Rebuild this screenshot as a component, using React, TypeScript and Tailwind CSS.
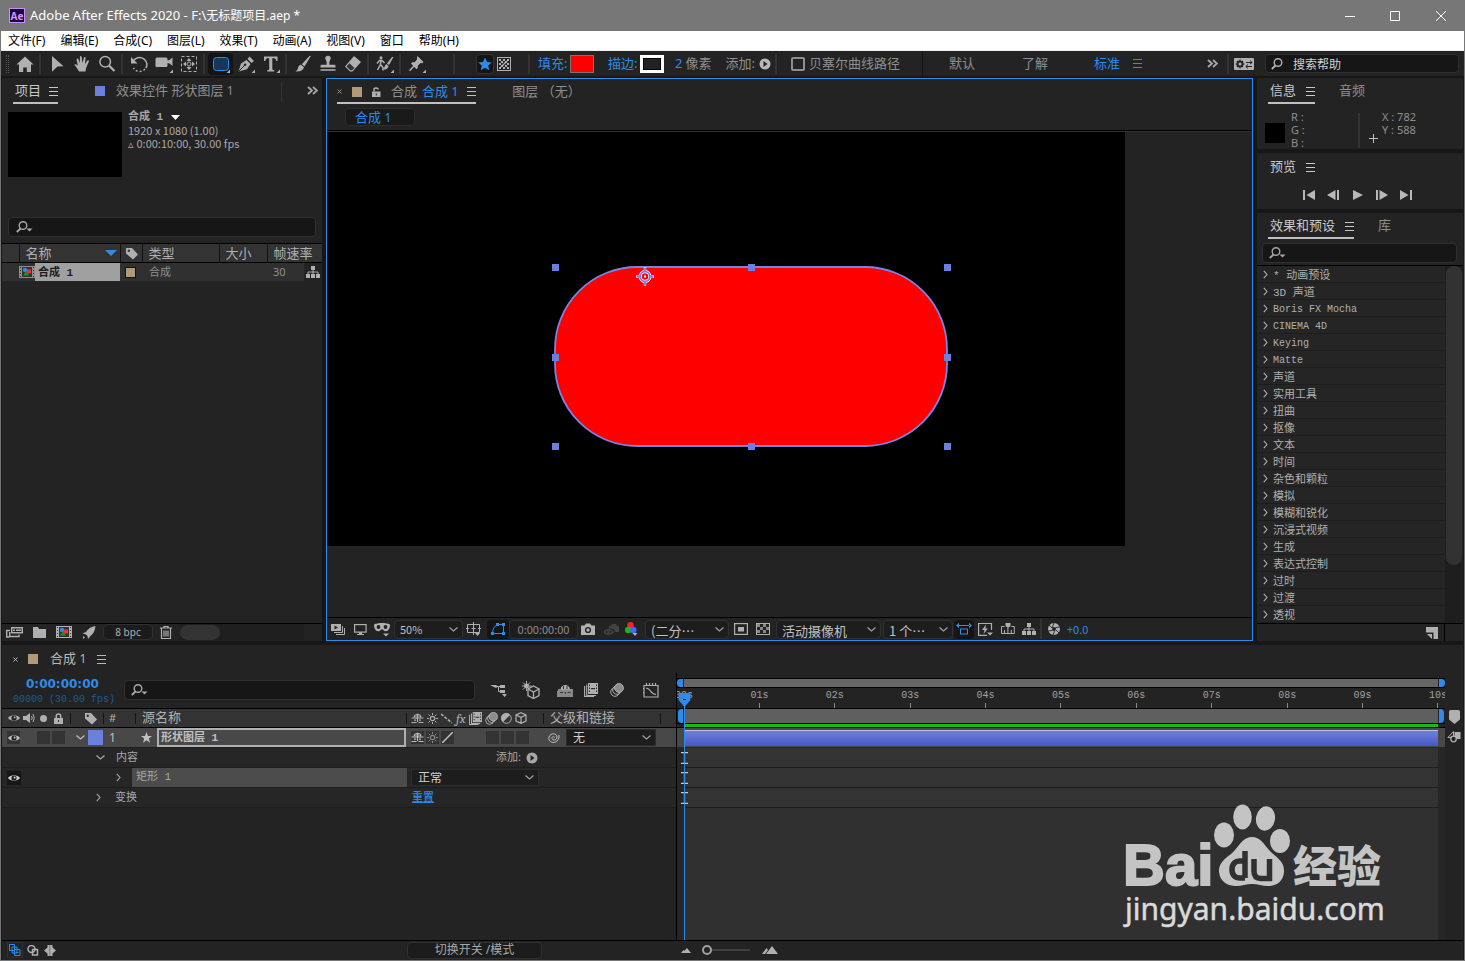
import React from "react";

const CJK = "font-['Noto_Sans','Noto_Sans_CJK_SC',sans-serif]";
const NARROW = "font-['Noto_Sans_CJK_SC',sans-serif]";
const MONO = "font-['Liberation_Mono','Noto_Sans_CJK_SC',monospace]";

type IconProps = {
  w?: number;
  h?: number;
  className?: string;
  children: React.ReactNode;
};

/** Icon frame whose user units equal screen pixels. */
function Icon({ w = 18, h = 18, className = "", children }: IconProps) {
  return (
    <svg
      width={w}
      height={h}
      viewBox={`0 0 ${w} ${h}`}
      className={`shrink-0 ${className}`}
      fill="currentColor"
      stroke="none"
      aria-hidden="true"
    >
      {children}
    </svg>
  );
}

const line = { fill: "none", stroke: "currentColor", strokeWidth: 1 } as const;
const line15 = { fill: "none", stroke: "currentColor", strokeWidth: 1.5 } as const;

/* ---------- shared icons ---------- */

const Menu = ({ className = "" }: { className?: string }) => (
  <Icon w={9} h={9} className={className}>
    <path d="M0 0h9v1H0zM0 4h9v1H0zM0 8h9v1H0z" />
  </Icon>
);
const Caret = () => (
  <Icon w={9} h={5}>
    <path d="M0.5 0.5 4.5 4 8.5 0.5" {...line} strokeWidth={1.2} />
  </Icon>
);
const Right = () => (
  <Icon w={5} h={9}>
    <path d="M0.8 0.8 4 4.5 0.8 8.2" {...line} strokeWidth={1.1} />
  </Icon>
);
const Guillemet = () => (
  <Icon w={11} h={9}>
    <path d="M1 1l4 3.5L1 8M6 1l4 3.5L6 8" {...line} strokeWidth={1.8} />
  </Icon>
);
const Search = ({ drop = true }: { drop?: boolean }) => (
  <Icon w={18} h={12}>
    <circle cx="7" cy="4.5" r="3.8" {...line} strokeWidth={1.4} />
    <path d="M4.5 7.5 0.8 11" {...line} strokeWidth={1.8} />
    {drop && <path d="M10.5 7.5h6l-3 3z" />}
  </Icon>
);
const PlayDot = () => (
  <Icon w={12} h={12}>
    <circle cx="6" cy="6" r="5.5" />
    <path d="M4.5 3v6l4-3z" fill="#222" />
  </Icon>
);
const Eye = ({ bright = false }: { bright?: boolean }) => (
  <Icon w={12} h={8} className={bright ? "text-[#d0d0d0]" : ""}>
    <path d="M0 4C2.5 0.3 9.5 0.3 12 4 9.5 7.7 2.5 7.7 0 4z" />
    <circle cx="6" cy="4" r="2.6" fill="#222" />
    <circle cx="6.6" cy="3.4" r="1" />
  </Icon>
);
const Tag = () => (
  <Icon w={13} h={13}>
    <path d="M1 1l6 0L13 7.5 8 12.5 1 6.5z" />
    <circle cx="3.8" cy="3.8" r="1.2" fill="#333" />
  </Icon>
);
const Comp = () => (
  <Icon w={16} h={12}>
    <path d="M0 0h16v12H0z" />
    <path d="M1 1h1v1H1zM1 4h1v1H1zM1 7h1v1H1zM1 10h1v1H1zM14 1h1v1h-1zM14 4h1v1h-1zM14 7h1v1h-1zM14 10h1v1h-1zM3 1h10v10H3z" fill="#333" />
    <circle cx="6" cy="4" r="2.2" fill="#2d8ceb" />
    <path d="M8 3.5h4v4H8z" fill="#e33" />
    <path d="M4 9.5 7 5.5l3 4z" fill="#1a9c1a" />
  </Icon>
);
const Flow = () => (
  <Icon w={14} h={12}>
    <path d="M5 0h4v4H5zM0 8h4v4H0zM5 8h4v4H5zM10 8h4v4h-4z" />
    <path d="M7 4v4M2 8V6h10v2" {...line} />
  </Icon>
);
const Shy = () => (
  <Icon w={13} h={11}>
    <path d="M2.5 4.500C2.500-.5 10.500-.5 10.500 4.500z" />
    <path d="M0.500 5h12M6.500 1v8M0.500 9.500h5M7.500 9.500h5M3 7.200h2M8 7.200h2" {...line} strokeWidth={1.2} />
    <path d="M5 1.800v2.500M8 1.800v2.500" stroke="#333" strokeWidth="1" />
  </Icon>
);
const Sun = ({ dim = false }: { dim?: boolean }) => (
  <Icon w={11} h={11} className={dim ? "text-[#8a8a8a]" : ""}>
    <circle cx="5.5" cy="5.5" r="2.2" {...line} strokeWidth={1.2} />
    <path d="M5.5 0v2M5.5 9v2M0 5.5h2M9 5.5h2M1.6 1.6 3 3M8 8l1.4 1.4M9.4 1.6 8 3M3 8 1.6 9.4" {...line} />
  </Icon>
);
const Film = ({ size = 12 }: { size?: number }) => (
  <svg width={size} height={size} viewBox="0 0 14 14" className="shrink-0" fill="currentColor" aria-hidden="true">
    <path d="M4 0h10v11H4z" />
    <path d="M5 1.500h1v1.500H5zM5 4.500h1V6H5zM5 7.500h1V9H5zM12 1.500h1v1.500h-1zM12 4.500h1V6h-1zM12 7.500h1V9h-1zM7 5h4v1.200H7z" fill="#2b2b2b" />
    <path d="M2.700 1.500v11H12M.6 3v10.500h9.500" {...line} strokeWidth={1.1} />
  </svg>
);
const Blur = ({ size = 12 }: { size?: number }) => (
  <svg width={size} height={size} viewBox="0 0 14 14" className="shrink-0" aria-hidden="true">
    <circle cx="5" cy="9" r="4.300" {...line} />
    <circle cx="7" cy="7" r="4.300" {...line} />
    <circle cx="9" cy="5" r="4.400" fill="#8c8c8c" stroke="#b0b0b0" />
  </svg>
);
const Cube = ({ size = 12 }: { size?: number }) => (
  <svg width={size} height={size} viewBox="0 0 12 12" className="shrink-0" aria-hidden="true">
    <path d="M6 .7 11 3v6L6 11.3 1 9V3zM1 3l5 2.4L11 3M6 5.4v5.9" {...line} strokeWidth={1.2} />
  </svg>
);

/* ---------- toolbar ---------- */

const corner = <path d="M18 14.5V18h-3.5z" />;

const tools: { name: string; on?: boolean; icon: React.ReactNode }[][] = [
  [{ name: "主页", icon: <path d="M9 1.5 17.5 9.5H15V17h-4.2v-4.5H7.2V17H3V9.5H.5z" /> }],
  [
    { name: "选取工具", icon: <path d="M4 1 15.5 11.2 9.5 11.5 4 16.8z" /> },
    {
      name: "手形工具",
      icon: (
        <path d="M6 16.5C4.5 13.5 2.5 11.5 1.3 9.8c.8-1 2-.7 3.5.9L3.600 4.500c0-1.200 1.500-1.300 1.800-.2L6.800 8.300 6.900 2c.1-1.200 1.700-1.200 1.800 0L9.400 8l1.500-5.300c.4-1 1.800-.7 1.700.4L12 9l2.400-3.400c.8-.8 1.900-.1 1.500.8L13.5 12c-.6 1.6-.8 3-1 4.5z" />
      ),
    },
    {
      name: "缩放工具",
      icon: (
        <>
          <circle cx="7.2" cy="6.8" r="5.3" {...line15} />
          <path d="M11 10.6 16.5 16" {...line} strokeWidth={2.2} />
        </>
      ),
    },
  ],
  [
    {
      name: "旋转工具",
      icon: (
        <>
          <path d="M3 6.5C5 2.5 10 1.2 13.8 3.8 17 6 17.8 10 15.8 13" {...line15} />
          <path d="M15 14C12 17.5 6 17.2 3.5 13" {...line15} strokeDasharray="2 2" />
          <path d="M1 2v6.500h6.500z" />
        </>
      ),
    },
    {
      name: "摄像机工具",
      icon: (
        <>
          <path d="M.5 4q0-1.500 1.500-1.500h9q1.500 0 1.500 1.500v1.500l2-.5L17.500 2.500v8.500L14.500 8.500l-2-.5v2.500q0 1.500-1.500 1.500H2Q.5 12.500.5 11z" />
          {corner}
        </>
      ),
    },
    {
      name: "锚点工具",
      icon: (
        <>
          <rect x="1.500" y="1.500" width="15" height="15" {...line} strokeDasharray="3 2" />
          <path d="M9 3l2.500 3h-5zM9 15l2.500-3h-5zM3 9l3-2.500v5zM15 9l-3-2.500v5z" />
          <circle cx="9" cy="9" r="2" {...line} />
        </>
      ),
    },
  ],
  [
    {
      name: "圆角矩形工具",
      on: true,
      icon: (
        <>
          <rect x="1.500" y="2.500" width="15" height="13" rx="3" fill="#16365c" stroke="#2d8ceb" />
          <path d="M18 14.500V18h-3.500z" fill="#b0b0b0" />
        </>
      ),
    },
    {
      name: "钢笔工具",
      icon: (
        <>
          <path d="M1.500 16.500 4 8.500 9.500 5l4 4L10 14.300z" />
          <path d="M2 16 7.500 10.500" stroke="#232323" fill="none" />
          <circle cx="8" cy="9.800" r="1.300" fill="#232323" />
          <path d="M10.500 4 12.500 1.500 17 6l-2.500 2z" />
          {corner}
        </>
      ),
    },
    {
      name: "横排文字工具",
      icon: (
        <>
          <path d="M2 1.500h13.500V6h-1.200q-.5-2.800-2-2.800h-2V14q0 1.200 2 1.300v1.200H5.200v-1.200q2-.1 2-1.300V3.200h-2q-1.500 0-2 2.800H2z" />
          {corner}
        </>
      ),
    },
  ],
  [
    {
      name: "画笔工具",
      icon: <path d="M17 .8 10.500 11.500 7.800 9.200 15.500 1zM7 9.800l3 2.500c-.8 3-3.500 4.500-8.500 4.200 2.200-1.200 2-2.500 2.700-4.200.6-1.500 1.600-2.300 2.800-2.500z" />,
    },
    {
      name: "仿制图章工具",
      icon: (
        <path d="M9 .8c2 0 3 1.400 2.700 2.900L10.400 7v2.800h5.100q1 0 1 1v1.700h-15v-1.700q0-1 1-1h5.100V7L6.300 3.700C6 2.200 7 .8 9 .8zM1.500 14.200h15v1.600h-15z" />
      ),
    },
    {
      name: "橡皮擦工具",
      icon: (
        <>
          <path d="M10 1 17 7 8.500 16.500H6L1 11.500z" />
          <path d="M2.500 11.500 5.500 8.200l5 4.700L8 15.300H6.300z" fill="#333" />
        </>
      ),
    },
  ],
  [
    {
      name: "Roto 笔刷工具",
      icon: (
        <>
          <circle cx="5" cy="2.800" r="1.500" />
          <path d="M5 4.500 4.500 9.500 1.500 15M4.500 9.500l2.500 3v3M1 8.500 3.500 5.500H6L8.500 8" {...line15} />
          <path d="M17.500 2 13 10l-2-1.600L16 2zM10.300 9l2.300 1.900c-.5 2.500-2.500 3.900-6 3.600 1.800-1 2-4 3.700-5.500z" />
          {corner}
        </>
      ),
    },
  ],
  [
    {
      name: "人偶位置控点工具",
      icon: (
        <>
          <path d="M9.500 1 15.500 7 14.300 8.200 12.500 8 9.800 10.800V13L8.500 14.200 3 8.500 4.200 7.300H6.500L9 4.500V2.300z" />
          <path d="M6 11 1.500 15.800" {...line15} />
          {corner}
        </>
      ),
    },
  ],
];

function Sep({ className = "" }: { className?: string }) {
  return <span className={`h-5 w-[2px] shrink-0 bg-[#333] ${className}`} />;
}

function Toolbar() {
  return (
    <div className={`flex h-[27px] shrink-0 items-center border-b-2 border-[#171717] bg-[#232323] text-[13px] text-[#8f8f8f] ${CJK}`}>
      <span className="ml-[5px] mr-[3px] h-[18px] w-[3px] border-x border-dotted border-[#555]" />
      {tools.map((group, i) => (
        <React.Fragment key={i}>
          {i > 0 && <Sep className="mx-[2px] mr-[3px]" />}
          {group.map((t) => (
            <button
              key={t.name}
              type="button"
              aria-label={t.name}
              className={`flex h-[22px] w-[25px] items-center justify-center rounded text-[#b0b0b0] ${t.on ? "bg-[#141414]" : ""}`}
            >
              <Icon>{t.icon}</Icon>
            </button>
          ))}
        </React.Fragment>
      ))}
      <Sep className="ml-6 mr-[21px]" />
      <button type="button" aria-label="形状" className="flex h-5 w-[18px] items-center justify-center rounded border border-[#333] bg-[#141414] text-[#2d8ceb]">
        <Icon w={14} h={14}>
          <path d="M7 .5 9 5l4.800.4-3.600 3.200 1.100 4.700L7 10.800l-4.300 2.500 1.100-4.700L.2 5.400 5 5z" />
        </Icon>
      </button>
      <button type="button" aria-label="蒙版" className="ml-[3px] text-[#b0b0b0]">
        <Icon w={14} h={14}>
          <rect x=".5" y=".5" width="13" height="13" {...line} />
          <path d="M2 2h2v2H2zM6 2h2v2H6zM10 2h2v2h-2zM4 4h2v2H4zM8 4h2v2H8zM2 6h2v2H2zM10 6h2v2h-2zM4 8h2v2H4zM8 8h2v2H8zM2 10h2v2H2zM6 10h2v2H6zM10 10h2v2h-2z" />
          <path d="M4 10 10 4" {...line15} />
        </Icon>
      </button>
      <Sep className="ml-[17px] mr-2" />
      <button type="button" className="w-8 text-left text-[#2d8ceb]">填充:</button>
      <button type="button" aria-label="填充颜色" className="h-[18px] w-6 border border-[#777] bg-[#f00]" />
      <button type="button" className="ml-[14px] w-8 text-left text-[#2d8ceb]">描边:</button>
      <button type="button" aria-label="描边颜色" className="h-[18px] w-6 border-4 border-white bg-[#222] outline outline-1 -outline-offset-4 outline-black" />
      <button type="button" className="ml-[11px] text-[#2d8ceb]">2</button>
      <span className="ml-[3px]">像素</span>
      <span className="ml-[14px]">添加:</span>
      <button type="button" aria-label="添加" className="ml-1 text-[#b8b8b8]"><PlayDot /></button>
      <Sep className="ml-1" />
      <label className="ml-[14px] flex items-center gap-1">
        <input type="checkbox" className="size-[14px] appearance-none rounded-[2px] border-2 border-[#8f8f8f]" />
        贝塞尔曲线路径
      </label>
      <span className="ml-[22px] h-6 w-px bg-[#151515]" />
      <button type="button" className="ml-[26px]">默认</button>
      <button type="button" className="ml-[47px]">了解</button>
      <button type="button" className="ml-[46px] text-[#2d8ceb]">标准</button>
      <button type="button" aria-label="工作区菜单" className="ml-[13px] text-[#2d8ceb]"><Menu /></button>
      <span className="flex-1" />
      <button type="button" aria-label="更多工作区" className="text-[#a8a8a8]"><Guillemet /></button>
      <Sep className="ml-[9px] mr-[5px]" />
      <button type="button" aria-label="工作区设置" className="text-[#b0b0b0]">
        <Icon w={20} h={12}>
          <rect width="20" height="12" rx="1" />
          <circle cx="6" cy="6" r="2.500" fill="none" stroke="#232323" strokeWidth="2" />
          <path d="M6 1.500v9M1.500 6h9M3 3l6 6M9 3 3 9" stroke="#232323" strokeWidth="1.200" />
          <circle cx="6" cy="6" r="1.500" />
          <path d="M12 4.500h6M16 2.500l2.200 2L16 6M18 8.500h-6M14 6.500l-2.200 2 2.200 2" stroke="#232323" fill="none" />
        </Icon>
      </button>
      <label className="ml-[11px] mr-[5px] flex h-[19px] w-[194px] items-center gap-1 rounded border border-[#2e2e2e] bg-[#161616] pl-[5px] text-[#b0b0b0]">
        <Search drop={false} />
        <input
          aria-label="搜索帮助"
          placeholder="搜索帮助"
          className={`min-w-0 flex-1 bg-transparent pt-[2px] text-[12px] outline-none placeholder:text-[#d0d0d0] ${CJK}`}
        />
      </label>
    </div>
  );
}

/* ---------- project panel ---------- */

function ProjectPanel() {
  return (
    <section className={`flex w-[320px] shrink-0 flex-col bg-[#232323] ${CJK}`}>
      <div className="flex h-[26px] items-start pr-1 text-[13px] text-[#8f8f8f]">
        <button type="button" className="ml-[11px] flex h-[26px] items-center gap-2 border-b-2 border-[#c0c0c0] pl-[2px] pt-[2px] text-[#c8c8c8]">
          项目 <Menu />
        </button>
        <button type="button" className="ml-[37px] flex h-[26px] items-center gap-[11px] whitespace-nowrap">
          <span className="size-[10px] bg-[#6a7fe0]" />
          <span>效果控件 形状图层 <span className="text-[12px]">1</span></span>
        </button>
        <span className="flex-1" />
        <span className="mt-1 h-5 w-px bg-[#333]" />
        <button type="button" aria-label="更多面板" className="ml-[25px] mt-2 text-[#a8a8a8]"><Guillemet /></button>
      </div>
      <div className="flex gap-[6px] pl-[6px] pt-2">
        <div className="h-[65px] w-[114px] bg-black" />
        <div className={`-mt-px text-[11px] leading-[13px] text-[#a8a8a8] ${NARROW}`}>
          <button type="button" className={`flex items-center gap-2 font-bold ${MONO}`}>
            合成 1
            <Icon w={9} h={5} className="text-white"><path d="M0 0h9L4.500 5z" /></Icon>
          </button>
          <p>1920 x 1080 (1.00)</p>
          <p>▵ 0:00:10:00, 30.00 fps</p>
        </div>
      </div>
      <label className="mx-[6px] mt-10 flex h-5 items-center rounded border border-[#303030] bg-[#161616] pl-[7px] text-[#a8a8a8]">
        <Search />
        <input aria-label="搜索项目" className="min-w-0 flex-1 bg-transparent text-[12px] outline-none" />
      </label>
      <table className="mt-[6px] w-full table-fixed border-collapse text-[#b0b0b0]">
        <colgroup>
          <col className="w-[17px]" />
          <col className="w-[101px]" />
          <col className="w-[22px]" />
          <col className="w-[77px]" />
          <col className="w-12" />
          <col />
        </colgroup>
        <thead>
          <tr className="h-[19px] border-y border-black bg-[#333] text-[13px] leading-4">
            <th className="border-r border-[#111]" />
            <th className="border-r border-[#111] p-0 pl-[6px] text-left font-normal">
              <span className="flex items-center justify-between pr-[3px]">
                名称
                <Icon w={12} h={6} className="text-[#2d8ceb]"><path d="M0 0h12L6 6z" /></Icon>
              </span>
            </th>
            <th className="border-r border-[#111] p-0 pl-1" aria-label="标签"><Tag /></th>
            <th className="border-r border-[#111] p-0 pl-[6px] text-left font-normal">类型</th>
            <th className="border-r border-[#111] p-0 pl-[6px] text-left font-normal">大小</th>
            <th className="p-0 pl-[6px] text-left font-normal">帧速率</th>
          </tr>
        </thead>
        <tbody>
          <tr className="h-[18px] bg-[#303030] text-[11px] leading-4 text-[#8f8f8f]">
            <td className="p-0" />
            <td className="p-0">
              <span className="flex items-center">
                <Comp />
                <span className={`flex h-[18px] flex-1 items-center bg-[#a0a0a0] pl-[3px] pt-px font-bold text-[#1c1c1c] ${MONO}`}>合成 1</span>
              </span>
            </td>
            <td className="p-0 pl-[5px]"><span className="block size-[11px] border border-[#111] bg-[#b09a78]" /></td>
            <td className="p-0 pl-[7px]">合成</td>
            <td className="p-0" />
            <td className="p-0 pl-[6px]">
              <span className="flex items-center justify-between">30<span className="flex h-[18px] items-center bg-[#232323] px-[2px] text-[#b0b0b0]"><Flow /></span></span>
            </td>
          </tr>
        </tbody>
      </table>
      <div className="flex-1" />
      <div className="flex h-[18px] items-center border-t border-black pb-px pl-1 text-[#b0b0b0]">
        <button type="button" aria-label="解释素材" className="w-[27px]">
          <Icon w={17} h={12}>
            <path d="M5.700 1.700h10.600v5H5.700zM0 4.500h4M.7 4v7H3.500M3.700 6v4.500H13V8.500" {...line} strokeWidth={1.4} />
            <path d="M7 3.500h2v1.500H7zM10 3.500h5v1.500h-5z" />
          </Icon>
        </button>
        <button type="button" aria-label="新建文件夹" className="w-[23px]">
          <Icon w={14} h={11}><path d="M0 0h5l1 2h7v9H0z" /></Icon>
        </button>
        <button type="button" aria-label="新建合成" className="w-[26px]"><Comp /></button>
        <button type="button" aria-label="项目设置" className="w-[21px]">
          <Icon w={14} h={13}><path d="M13.500 0C9 .5 6 3 4 6L0.500 7.500 4 8.500 5.500 10 6 13 8.500 10C11 8 13 5 13.500 0zM1 10l2 1.500L1 13z" /></Icon>
        </button>
        <button type="button" className="h-4 w-[50px] rounded-sm border border-[#303030] bg-[#1c1c1c] text-[10px] leading-none">8 bpc</button>
        <button type="button" aria-label="删除" className="ml-[7px]">
          <Icon w={12} h={13}><path d="M4 1.500V.5h4v1M0 2h12M1.500 2.500v10h9v-10M4 4.500v6M6 4.500v6M8 4.500v6" {...line} strokeWidth={1.2} /></Icon>
        </button>
        <div className="ml-2 mr-[18px] h-full flex-1 bg-[#1f1f1f]"><div className="mt-px h-[15px] w-10 rounded-full bg-[#333]" /></div>
      </div>
    </section>
  );
}

/* ---------- composition viewer ---------- */

const handles = [
  [228, 135], [424, 135], [620, 135],
  [228, 225], [620, 225],
  [228, 314], [424, 314], [620, 314],
];

function FooterSelect({ label, value, className }: { label: string; value: string; className: string }) {
  return (
    <span className={`relative flex h-[19px] items-center rounded border border-[#303030] bg-[#1d1d1d] ${className}`}>
      <select aria-label={label} className="h-full w-full appearance-none bg-transparent pl-[5px] text-[#c0c0c0] outline-none">
        <option>{value}</option>
      </select>
      <span className="pointer-events-none absolute right-1 text-[#a0a0a0]"><Caret /></span>
    </span>
  );
}

function Viewer() {
  return (
    <section className={`flex min-w-0 flex-1 flex-col border border-[#2d8ceb] bg-[#232323] ${CJK}`}>
      <div className="flex h-[25px] text-[13px] text-[#8f8f8f]">
        <div className="ml-[10px] flex items-center border-b-2 border-[#c0c0c0] pt-[2px]">
          <button type="button" aria-label="关闭"><Icon w={5} h={5}><path d="M.5.5l4 4M4.500.5l-4 4" {...line} /></Icon></button>
          <span className="ml-[10px] size-[10px] bg-[#b09a78]" />
          <Icon w={9} h={10} className="ml-[10px] text-[#b0b0b0]">
            <path d="M0 4.500h8.500V10H0z" />
            <path d="M2 4.500V2.500C2 .4 6 .4 6 2.500" {...line15} />
            <path d="M3.800 6.500h1v2h-1z" fill="#232323" />
          </Icon>
          <span className="ml-[10px]">合成</span>
          <span className="ml-[5px] text-[#2d8ceb]">合成 <span className="text-[12px]">1</span></span>
          <button type="button" aria-label="面板菜单" className="ml-[9px] text-[#c0c0c0]"><Menu /></button>
        </div>
        <button type="button" className="ml-9">图层 （无）</button>
      </div>
      <div className="flex h-[27px] items-start border-b border-black pl-[18px] pt-1">
        <button type="button" className="h-[18px] w-[70px] rounded border border-[#2c2c2c] bg-[#1a1a1a] pl-[9px] text-left text-[13px] leading-4 text-[#2d8ceb]">合成 <span className="text-[12px]">1</span></button>
      </div>
      <div className="flex-1 border-t border-[#303030]">
        <svg width="798" height="414" viewBox="0 0 798 414" className="block bg-black" role="img" aria-label="合成 1">
          <rect x="228" y="135" width="392" height="179" rx="82" fill="#f00" stroke="#7585e6" strokeWidth="1.800" />
          <g fill="#6a7fe0">
            {handles.map(([x, y]) => (
              <rect key={`${x}-${y}`} x={x - 3} y={y - 3} width="7" height="7" />
            ))}
          </g>
          <g transform="translate(318 144.500)" fill="none">
            <g stroke="#fff" strokeWidth="3.200"><circle r="4.800" /><path d="M0-9v5M0 4v5M-9 0h5M4 0h5" strokeWidth="2.400" /></g>
            <g stroke="#6a7fe0" strokeWidth="1.800"><circle r="4.800" /><path d="M0-8.500v4M0 4.500v4M-8.500 0h4M4.500 0h4" /></g>
            <rect x="-1" y="-1" width="2" height="2" fill="#fff" />
          </g>
        </svg>
      </div>
      <div className={`flex h-[23px] items-center border-t border-black pl-1 text-[11px] text-[#b0b0b0] ${NARROW}`}>
        <button type="button" aria-label="始终预览此视图" className="w-[23px]">
          <Icon w={14} h={11}>
            <path d="M0 0h10v7H0z" />
            <path d="M3.500 1.500v4L7 3.500z" fill="#232323" />
            <path d="M11.500 2v6.500H3M13.500 4v6.500H5" {...line} />
          </Icon>
        </button>
        <button type="button" aria-label="主查看器" className="w-5">
          <Icon w={13} h={11}><rect x=".6" y=".6" width="11.500" height="7.500" {...line} strokeWidth={1.2} /><path d="M5 8h3v2H5zM3 10h7v1H3z" /></Icon>
        </button>
        <button type="button" aria-label="VR" className="w-5 pt-[2px]">
          <Icon w={16} h={14}>
            <path d="M0 1.500C4-.5 12-.5 16 1.500 16 6 14 9 10.500 8L8 6 5.500 8C2 9 0 6 0 1.500z" />
            <circle cx="4.500" cy="4" r="1.900" fill="#232323" /><circle cx="11.500" cy="4" r="1.900" fill="#232323" />
            <path d="M9 10.500h6l-3 3z" />
          </Icon>
        </button>
        <FooterSelect label="放大率" value="50%" className="w-[69px]" />
        <button type="button" aria-label="网格和参考线" className="ml-[3px] w-[21px]">
          <Icon w={15} h={15}><path d="M1.500 2.500h12v8h-12zM7.500 0v5M7.500 8v5M0 6.500h3M12 6.500h3M5.500 6.500h4M7.500 4.500v4" {...line} /><path d="M9 11h5l-2.500 3z" /></Icon>
        </button>
        <button type="button" aria-label="切换蒙版和形状路径可见性" className="flex h-[19px] w-[22px] items-center justify-center rounded bg-[#151515] text-[#2d8ceb]">
          <Icon w={14} h={12}><path d="M1.500 10.500C1.500 6 3.500 3 6.500 1.500h6v9z" {...line} /><path d="M0 9h3v3H0zM5 0h3v3H5zM11 0h3v3h-3zM11 9h3v3h-3z" /></Icon>
        </button>
        <button type="button" className="h-[19px] w-[69px] rounded border border-[#303030] bg-[#1d1d1d] leading-none text-[#8f8f8f]">0:00:00:00</button>
        <button type="button" aria-label="拍摄快照" className="ml-[3px] w-[23px]">
          <Icon w={14} h={12}><path d="M0 2.500h3.500L5 .5h4l1.500 2H14V12H0z" /><circle cx="7" cy="7" r="2.400" fill="none" stroke="#232323" strokeWidth="1.400" /></Icon>
        </button>
        <button type="button" aria-label="显示快照" className="w-[21px] text-[#444]">
          <Icon w={15} h={13}><path d="M5 3h2l1-2h4l1 2h2v6h-4a4 4 0 0 0-6-3z" /><path d="M0 9C2 6 7 6 9 9 7 12 2 12 0 9z" {...line15} /><circle cx="4.500" cy="9" r="1.500" /></Icon>
        </button>
        <button type="button" aria-label="通道" className="w-5">
          <Icon w={14} h={14}><circle cx="5.500" cy="3.200" r="3.200" fill="#f22" /><circle cx="3.200" cy="8" r="3.200" fill="#18b818" /><circle cx="8.300" cy="8" r="3.200" fill="#3c6cff" /><path d="M7.500 11h5L10 14z" /></Icon>
        </button>
        <span className="text-[13px]"><FooterSelect label="分辨率" value="(二分…" className="w-[84px]" /></span>
        <button type="button" aria-label="目标区域" className="ml-[5px] w-[22px]">
          <Icon w={14} h={12}><rect x=".6" y=".6" width="12.800" height="10.800" {...line} strokeWidth={1.2} /><path d="M4 4h6v4.500H4z" /></Icon>
        </button>
        <button type="button" aria-label="切换透明网格" className="w-5">
          <Icon w={14} h={12}><rect x=".5" y=".5" width="13" height="11" {...line} /><path d="M1 1h3v3H1zM7 1h3v3H7zM4 4h3v3H4zM10 4h3v3h-3zM1 7h3v3H1zM7 7h3v3H7z" fill="#888" /></Icon>
        </button>
        <span className="text-[13px]"><FooterSelect label="3D 视图" value="活动摄像机" className="w-[105px]" /></span>
        <span className="ml-[2px] text-[13px]"><FooterSelect label="视图布局" value="1 个…" className="w-[70px]" /></span>
        <button type="button" aria-label="像素长宽比校正" className="ml-px flex h-[19px] w-5 items-center justify-center rounded bg-[#151515] text-[#2d8ceb]">
          <Icon w={16} h={12}><path d="M0 2.500 3-.2v5.400zM16 2.500l-3-2.700v5.400zM2 2h12v1H2z" /><rect x="4.500" y="6" width="7" height="5" {...line} /></Icon>
        </button>
        <button type="button" aria-label="快速预览" className="ml-1 w-[23px]">
          <Icon w={15} h={13}><path d="M13.500 7V.5H.6v11.900H9" {...line} strokeWidth={1.2} /><path d="M8 1.500 4 7h2.500L5.500 11 10 5.500H7.500zM9 9.500h6l-3 3z" /></Icon>
        </button>
        <button type="button" aria-label="时间轴" className="w-[21px]">
          <Icon w={14} h={12}><path d="M3.500 3.500h-3v7h12.800v-7h-3M3.500 7v3M6.900 5v5M10.300 7v3" {...line} /><path d="M4.500 0h5v3L7 5 4.500 3z" /></Icon>
        </button>
        <button type="button" aria-label="合成流程图"><Flow /></button>
        <Sep className="ml-[4px]" />
        <button type="button" aria-label="重置曝光度" className="ml-[6px]">
          <Icon w={12} h={12}><circle cx="6" cy="6" r="4" fill="none" stroke="currentColor" strokeWidth="4" /><path d="M6 0 4 5M12 4 7.500 4.500M11 10 8 7M5 12l1.500-4M0 8l4.500-.5M1 2l3 3" stroke="#232323" strokeWidth=".9" /></Icon>
        </button>
        <button type="button" className="ml-[7px] text-[#2d8ceb]">+0.0</button>
      </div>
    </section>
  );
}

/* ---------- right column ---------- */

const effects = [
  "* 动画预设", "3D 声道", "Boris FX Mocha", "CINEMA 4D", "Keying", "Matte", "声道",
  "实用工具", "扭曲", "抠像", "文本", "时间", "杂色和颗粒", "模拟", "模糊和锐化",
  "沉浸式视频", "生成", "表达式控制", "过时", "过渡", "透视",
];

function PanelTab({ children, active = true }: { children: React.ReactNode; active?: boolean }) {
  return (
    <button
      type="button"
      className={`flex h-[26px] items-center gap-[10px] border-b-2 pl-[2px] pt-[2px] text-[13px] ${active ? "border-[#c0c0c0] text-[#c8c8c8]" : "border-transparent text-[#8f8f8f]"}`}
    >
      {children}
    </button>
  );
}

function RightColumn() {
  return (
    <aside className={`flex w-[206px] shrink-0 flex-col gap-1 ${CJK}`}>
      <section className="h-[71px] bg-[#232323]">
        <div className="flex gap-[22px] pl-[11px]">
          <PanelTab>信息 <Menu /></PanelTab>
          <PanelTab active={false}>音频</PanelTab>
        </div>
        <div className="flex pl-2 pt-[6px] text-[11px] leading-[13px] text-[#8f8f8f]">
          <span className="mt-[13px] size-5 bg-black" />
          <div className="ml-[6px] w-[67px]">
            <p>R :</p><p>G :</p><p>B :</p>
          </div>
          <span className="mt-[3px] h-[35px] w-[2px] bg-[#333]" />
          <Icon w={9} h={9} className="ml-[9px] mt-6 text-[#c0c0c0]"><path d="M4 0h1v9H4zM0 4h9v1H0z" /></Icon>
          <div className="ml-1">
            <p>X : 782</p><p>Y : 588</p>
          </div>
        </div>
      </section>
      <section className="h-14 bg-[#232323] pl-[11px] pt-px">
        <PanelTab active={false}><span className="text-[#c8c8c8]">预览</span><Menu className="text-[#c8c8c8]" /></PanelTab>
        <div className="flex items-center gap-[11px] pl-[35px] pt-[10px] text-[#b8b8b8]">
          <button type="button" aria-label="第一帧"><Icon w={13} h={10}><path d="M0 0h2v10H0zM12 0v10L3.500 5z" /></Icon></button>
          <button type="button" aria-label="上一帧"><Icon w={13} h={10}><path d="M10 0h2v10h-2zM8.500 0v10L0 5z" /></Icon></button>
          <button type="button" aria-label="播放"><Icon w={13} h={10}><path d="M2 0v10l10-5z" /></Icon></button>
          <button type="button" aria-label="下一帧"><Icon w={13} h={10}><path d="M1 0h2v10H1zM4.500 0v10L13 5z" /></Icon></button>
          <button type="button" aria-label="最后一帧"><Icon w={13} h={10}><path d="M11 0h2v10h-2zM1 0v10l8.500-5z" /></Icon></button>
        </div>
      </section>
      <section className="flex flex-1 flex-col bg-[#232323]">
        <div className="flex gap-[22px] pl-[11px]">
          <PanelTab>效果和预设 <Menu /></PanelTab>
          <PanelTab active={false}>库</PanelTab>
        </div>
        <label className="ml-[5px] mr-[6px] mt-1 flex h-5 items-center rounded border border-[#303030] bg-[#161616] pl-[6px] text-[#a8a8a8]">
          <Search />
          <input aria-label="搜索效果" className="min-w-0 flex-1 bg-transparent text-[12px] outline-none" />
        </label>
        <div className="mt-[2px] flex flex-1 border-y border-black">
          <ul className="flex-1">
            {effects.map((e) => (
              <li key={e} className="h-[17px] border-b border-[#1d1d1d] bg-[#252525]">
                <button
                  type="button"
                  className={`flex h-4 items-center gap-[5px] pl-[6px] leading-4 text-[#b0b0b0] ${/^[A-Z]/.test(e) ? "text-[10px]" : "text-[11px]"} ${MONO}`}
                >
                  <Right />
                  <span className="whitespace-pre pt-[3px]">{e}</span>
                </button>
              </li>
            ))}
          </ul>
          <div className="w-[18px] bg-[#1e1e1e] px-px"><div className="h-[299px] rounded-full bg-[#323232]" /></div>
        </div>
        <div className="mr-[18px] flex h-[17px] items-center justify-end border-r border-black pr-[6px] text-[#b0b0b0]">
          <button type="button" aria-label="新建动画预设"><Icon w={12} h={12}><path d="M0 0h12v12H7.500V5.500H0zM1 7h5v5z" /></Icon></button>
        </div>
      </section>
    </aside>
  );
}

/* ---------- timeline ---------- */

function Divider({ className = "" }: { className?: string }) {
  return <span className={`h-[11px] w-px shrink-0 bg-[#151515] ${className}`} />;
}

function Cell({ children }: { children?: React.ReactNode }) {
  return <span className="flex size-[13px] shrink-0 items-center justify-center bg-[#333]">{children}</span>;
}

function RowSelect({ label, value, className }: { label: string; value: string; className: string }) {
  return (
    <span className={`relative flex h-[17px] items-center border border-[#2c2c2c] bg-[#1d1d1d] ${className}`}>
      <select aria-label={label} className="h-full w-full appearance-none bg-transparent pl-[6px] text-[12px] leading-none text-[#d0d0d0] outline-none">
        <option>{value}</option>
      </select>
      <span className="pointer-events-none absolute right-1 text-[#a0a0a0]"><Caret /></span>
    </span>
  );
}

const seconds = ["00s", "01s", "02s", "03s", "04s", "05s", "06s", "07s", "08s", "09s", "10s"];

function LayerColumn() {
  return (
    <div className="flex w-[675px] shrink-0 flex-col border-r border-black">
      <div className="flex h-[35px] items-start">
        <div className="w-[112px] pl-[11px]">
          <button type="button" className="block pl-[13px] pt-[2px] font-['DejaVu_Sans',sans-serif] text-[12px] font-bold leading-[18px] text-[#2d8ceb]">0:00:00:00</button>
          <p className={`whitespace-nowrap pt-px text-[10px] leading-3 text-[#1c5a96] ${MONO}`}>00000 (30.00 fps)</p>
        </div>
        <label className="ml-[10px] mt-[7px] flex h-5 w-[351px] items-center rounded border border-[#303030] bg-[#161616] pl-[6px] text-[#a8a8a8]">
          <Search />
          <input aria-label="搜索图层" className="min-w-0 flex-1 bg-transparent text-[12px] outline-none" />
        </label>
        <div className="ml-[14px] mt-2 flex items-center text-[#b0b0b0]">
          <button type="button" aria-label="合成微型流程图" className="w-[33px]">
            <Icon w={19} h={14}><path d="M1 2h6l2 1.500L7 5zM11 2h5v3h-5zM11 7h5v3h-5zM13 11h5l-2.500 3z" /><path d="M8 3.500h3M9.500 3.500v5H11" {...line} /></Icon>
          </button>
          <button type="button" aria-label="草图 3D" className="w-[35px]">
            <Icon w={18} h={18}>
              <circle cx="4.500" cy="5" r="2.400" />
              <path d="M4.500 0v10M-.5 5h10M1 1.500l7 7M8 1.500l-7 7" {...line} />
              <path d="M11.500 5 17 8v6.500l-5.500 3L6 14.500V8z" fill="#232323" stroke="currentColor" strokeWidth="1.300" />
              <path d="M6 8l5.500 3L17 8M11.500 11v6.500" {...line} strokeWidth={1.3} />
            </Icon>
          </button>
          <button type="button" aria-label="隐藏图层" className="w-[27px]">
            <Icon w={17} h={13}><path d="M3.500 5.500C4-.5 12.500-.5 13 5.500z" /><path d="M0 7h16v6H0z" fill="#888" /><path d="M1 6h15" {...line15} /><path d="M6.500 2v3M10 2v3M3 8.500h3M10.500 8.500h3M8.300 8v2" stroke="#333" fill="none" /></Icon>
          </button>
          <button type="button" aria-label="帧混合" className="w-[26px]"><Film size={14} /></button>
          <button type="button" aria-label="运动模糊" className="w-[33px]"><Blur size={14} /></button>
          <button type="button" aria-label="图表编辑器">
            <Icon w={16} h={15}><path d="M1 2.500h14v11.500H1zM3.500 0v2.500M6.500 0v2.500M9.500 0v2.500M12.500 0v2.500M3 5c5 0 4 6.500 10 6.500M0 5.500h1M0 9.500h1" {...line} strokeWidth={1.2} /></Icon>
          </button>
        </div>
      </div>

      <div className="flex h-5 items-center border-y border-black bg-[#333] pl-[6px] text-[13px] text-[#b0b0b0]">
        <span className="w-[14px]"><Eye /></span>
        <Icon w={12} h={10} className="ml-px"><path d="M0 3h3l4-3v10L3 7H0z" /><path d="M8.500 3q1.500 2 0 4M10 1q2.500 4 0 8" {...line} /></Icon>
        <span className="ml-[5px] size-[7px] rounded-full bg-current" />
        <Icon w={9} h={11} className="ml-[7px]"><path d="M0 5h9v6H0z" /><path d="M2.300 5V3C2.300.3 6.700.3 6.700 3v2" {...line15} /><path d="M4 7h1v2H4z" fill="#333" /></Icon>
        <Divider className="ml-[7px]" />
        <span className="ml-[13px]"><Tag /></span>
        <Divider className="ml-[6px]" />
        <span className="ml-[5px] text-[11px]">#</span>
        <Divider className="ml-[19px] mr-[6px]" />
        源名称
        <span className="flex-1" />
        <Divider />
        <div className="ml-[4px] flex w-[132px] items-center gap-[3px]">
          <Shy /><Sun />
          <Icon w={12} h={11}><path d="M0 1 11 10" {...line15} strokeDasharray="3 1.500" /></Icon>
          <span className="font-serif text-[13px] italic leading-none">fx</span>
          <Film size={13} /><Blur size={13} />
          <Icon w={11} h={11}><circle cx="5.500" cy="5.500" r="4.800" {...line} /><path d="M9 2a5 5 0 1 1-7 7z" transform="rotate(180 5.500 5.500)" /></Icon>
          <Cube size={12} />
        </div>
        <Divider />
        <span className="ml-[6px] w-[110px]">父级和链接</span>
        <Divider className="mr-[15px]" />
      </div>

      <div className="flex h-5 items-center border-b border-[#1d1d1d] bg-[#484848] pl-[5px] text-[#c0c0c0]">
        <Cell><Eye /></Cell>
        <span className="w-[17px]" />
        <Cell /><span className="w-[2px]" /><Cell />
        <button type="button" aria-label="折叠图层" className="ml-[11px]"><Caret /></button>
        <span className="ml-[3px] size-[15px] bg-[#6a7fe0]" />
        <span className="w-8 pl-[6px] text-[12px]">1</span>
        <Icon w={11} h={11} className="ml-[6px]"><path d="M5.500 0 7 4h4L7.800 6.500 9 10.800 5.500 8.200 2 10.800l1.200-4.300L0 4h4z" /></Icon>
        <span className={`ml-[5px] flex h-[19px] w-[249px] items-center border-2 border-[#b0b0b0] pl-[2px] pt-[2px] text-[11px] font-bold leading-none ${MONO}`}>形状图层 1</span>
        <span className="ml-[5px] flex gap-[2px]">
          <Cell><Shy /></Cell><Cell><Sun dim /></Cell>
          <Cell><Icon w={11} h={11}><path d="M0 11 11 0" {...line15} /></Icon></Cell>
        </span>
        <span className="ml-8 flex gap-[2px]"><Cell /><Cell /><Cell /></span>
        <Icon w={13} h={13} className="ml-[18px]"><path d="M7.500 6.500c0-1.500-3-1-2.500 1 .5 2.500 5 2 5-1.500 0-4-6.500-4.500-8 0-1 4 3 6.500 6.500 5 2.500-1 4-4 3.500-7" {...line} /></Icon>
        <RowSelect label="父级和链接" value="无" className="ml-[6px] w-[90px]" />
      </div>

      <div className="flex h-5 items-center border-b border-[#1d1d1d] bg-[#262626] pl-[94px] text-[11px] text-[#a8a8a8]">
        <button type="button" aria-label="折叠内容"><Caret /></button>
        <span className="ml-[11px]">内容</span>
        <button type="button" className="ml-auto mr-[138px] flex items-center gap-[5px]">添加: <PlayDot /></button>
      </div>
      <div className="flex h-5 items-center border-b border-[#1d1d1d] bg-[#262626] pl-[5px] text-[11px] text-[#a8a8a8]">
        <span className="flex size-[14px] items-center justify-center bg-[#161616]"><Eye bright /></span>
        <button type="button" aria-label="展开矩形" className="ml-[95px]"><Right /></button>
        <span className={`ml-[11px] flex h-[19px] w-[275px] items-center bg-[#4c4c4c] pl-1 ${MONO}`}>矩形 1</span>
        <RowSelect label="混合模式" value="正常" className="ml-1 w-32" />
      </div>
      <div className="flex h-5 items-center border-b border-[#1d1d1d] bg-[#262626] pl-[94px] text-[11px] text-[#a8a8a8]">
        <button type="button" aria-label="展开变换"><Right /></button>
        <span className="ml-[14px] w-[297px]">变换</span>
        <a href="#reset" className="font-medium text-[#2d8ceb] underline">重置</a>
      </div>
      <div className="flex-1" />
    </div>
  );
}

function IBeam() {
  return (
    <Icon w={7} h={12} className="text-[#c8c8c8]"><path d="M0 .5h7M0 11.500h7M3.500 1v10" {...line} strokeWidth={1.3} /></Icon>
  );
}

function TrackColumn() {
  return (
    <div className="relative flex min-w-0 flex-1 flex-col pt-[5px]">
      <div className="flex h-[10px] border-y border-black">
        <span className="w-[6px] rounded-l-full bg-[#2d8ceb]" />
        <span className="mx-px flex-1 bg-[#666]" />
        <span className="w-[6px] rounded-r-full bg-[#2d8ceb]" />
      </div>
      <div className={`relative h-5 overflow-hidden text-[10px] text-[#a0a0a0] ${MONO}`}>
        <div className="mx-[7px] flex justify-between">
          {seconds.map((s) => (
            <span key={s} className="flex w-0 flex-col items-center">
              <span className="leading-[15px]">{s}</span>
              <span className="h-[5px] w-px bg-[#8a8a8a]" />
            </span>
          ))}
        </div>
      </div>
      <div className="flex h-4 border-y border-black px-px">
        <span className="w-[5px] rounded-l bg-[#2d8ceb]" />
        <span className="mx-px flex-1 bg-[#5f5f5f]" />
        <span className="w-[5px] rounded-r bg-[#2d8ceb]" />
      </div>
      <div className="mx-[7px] h-[3px] bg-[#10c010]" />
      <div className="h-5 border-t border-black bg-[#484848] px-[7px] pt-[2px]">
        <div className="h-4 border-t border-[#b8c0f0] bg-linear-to-b from-[#7080d4] to-[#4858c8]" />
      </div>
      <div className="flex flex-1 flex-col bg-[#262626] px-[7px] pt-px">
        {[0, 1, 2].map((i) => (
          <div key={i} className="flex h-5 items-center border-b border-[#1d1d1d] bg-[#333]"><span className="-ml-[3px]"><IBeam /></span></div>
        ))}
        <div className="flex-1 bg-[#303030]" />
      </div>
      <div className="pointer-events-none absolute bottom-0 left-px top-5 flex w-[13px] flex-col items-center text-[#2d8ceb]">
        <Icon w={13} h={14}><path d="M.5 0h12v7l-6 7-6-7z" /><path d="M5 6.500h3" stroke="#123" /></Icon>
        <span className="w-px flex-1 bg-[#2d8ceb]" />
      </div>
    </div>
  );
}

function Timeline() {
  return (
    <section className={`mt-1 flex min-h-[315px] flex-1 flex-col bg-[#232323] ${CJK}`}>
      <div className="flex h-7 items-center pl-[11px] text-[13px] text-[#b8b8b8]">
        <button type="button" aria-label="关闭"><Icon w={5} h={5}><path d="M.5.5l4 4M4.500.5l-4 4" {...line} /></Icon></button>
        <span className="ml-[10px] size-[10px] bg-[#b09a78]" />
        <button type="button" className="ml-3">合成 <span className="text-[12px]">1</span></button>
        <button type="button" aria-label="面板菜单" className="ml-[11px]"><Menu /></button>
      </div>
      <div className="flex flex-1">
        <LayerColumn />
        <TrackColumn />
        <div className="flex w-[18px] flex-col items-center pt-[37px] text-[#b0b0b0]">
          <button type="button" aria-label="添加标记"><Icon w={11} h={14}><path d="M0 1.500Q0 0 1.500 0h8Q11 0 11 1.500V9.500L5.500 14 0 9.500z" /></Icon></button>
          <button type="button" aria-label="合成按钮" className="mt-[7px]">
            <Icon w={14} h={12}><path d="M7.500 1h6v7h-6z" /><path d="M.8 6.500 6.500.5v6z" {...line} /><circle cx="6.500" cy="8" r="2.800" fill="#232323" stroke="currentColor" strokeWidth="1.300" /></Icon>
          </button>
        </div>
      </div>
      <div className="flex h-5 items-center border-t border-black pb-px pl-[5px] text-[#b0b0b0]">
        <button type="button" aria-label="展开图层开关" className="flex h-4 w-4 items-center justify-center border border-[#303030] text-[#2d8ceb]">
          <Icon w={12} h={12}><path d="M.5.5h5v6h-5zM3 3h5v6H3zM5.500 5.500h5.500v6H5.500z" fill="#232323" stroke="currentColor" /><path d="M7.500 8h2v1h-2z" /></Icon>
        </button>
        <button type="button" aria-label="展开转换控制" className="ml-[4px]">
          <Icon w={12} h={11}><circle cx="4.500" cy="4" r="3.500" {...line15} /><path d="M5.500 4.500h5v5.500h-5z" {...line15} /></Icon>
        </button>
        <button type="button" aria-label="展开入点出点" className="ml-[5px]">
          <Icon w={12} h={11}><path d="M3.500 0h5v2.500L12 5.500 8.500 8.500V11h-5V8.500L0 5.500l3.500-3z" /><path d="M5.800 0v11" stroke="#777" /></Icon>
        </button>
        <button type="button" className="ml-[351px] h-[17px] w-[135px] rounded border border-[#303030] bg-[#1c1c1c] text-[12px] leading-none text-[#a8a8a8]">切换开关 /模式</button>
        <Icon w={10} h={5} className="ml-[139px]"><path d="M0 5 2.500 2l1 .8L6 0l4 5z" /></Icon>
        <input
          type="range"
          aria-label="时间轴缩放"
          defaultValue={0}
          className="ml-[11px] h-3 w-12 appearance-none bg-transparent [&::-webkit-slider-runnable-track]:h-[2px] [&::-webkit-slider-runnable-track]:bg-[#404040] [&::-webkit-slider-thumb]:-mt-1 [&::-webkit-slider-thumb]:size-[10px] [&::-webkit-slider-thumb]:appearance-none [&::-webkit-slider-thumb]:rounded-full [&::-webkit-slider-thumb]:border-2 [&::-webkit-slider-thumb]:border-[#a0a0a0] [&::-webkit-slider-thumb]:bg-[#232323]"
        />
        <Icon w={16} h={8} className="ml-3"><path d="M4 8l6-8 6 8zM0 8l4.500-6 1.500 2-3 4z" /></Icon>
      </div>
    </section>
  );
}

/* ---------- site mark in the corner ---------- */

function Watermark() {
  return (
    <svg width="270" height="128" viewBox="0 0 270 128" className="pointer-events-none absolute bottom-[30px] right-[73px]" role="img" aria-label="Baidu 经验">
      <g fill="#c4c4c4">
        <text x="2" y="83" fontFamily="Liberation Sans, sans-serif" fontWeight="700" fontSize="58" stroke="#c4c4c4" strokeWidth="2">Bai</text>
        <ellipse cx="103" cy="33" rx="10" ry="12.500" />
        <ellipse cx="121.500" cy="15" rx="9.300" ry="12.500" />
        <ellipse cx="144.500" cy="16.500" rx="9.500" ry="12.200" transform="rotate(10 144.500 16.500)" />
        <ellipse cx="159" cy="39" rx="10" ry="12" />
        <path d="M131 35c8 0 12 7 17 13 6 7 16 11 15 22-1 10-8 14-16 14-6 0-10-2-16-2s-10 2-16 2c-8 0-16-4-17-14-1-11 10-15 16-22 5-6 9-13 17-13z" />
      </g>
      {/* open bowls of the "du" badge */}
      <g fill="none" stroke="#303030" strokeWidth="5.500">
        <path d="M124 49v27M124 59h-5c-5 0-8 3-8 8.500s3 8.500 8 8.500h5" />
        <path d="M133 57v12c0 5 2 7.500 7 7.500h8.500V57" />
      </g>
      <text x="172" y="81" fill="#c4c4c4" fontFamily="Noto Sans CJK SC, sans-serif" fontWeight="900" fontSize="44">经验</text>
      <text x="4" y="118" fill="#dadada" stroke="#dadada" strokeWidth=".5" fontFamily="Noto Sans, sans-serif" fontSize="30">jingyan.baidu.com</text>
    </svg>
  );
}

const menus = ["文件(F)", "编辑(E)", "合成(C)", "图层(L)", "效果(T)", "动画(A)", "视图(V)", "窗口", "帮助(H)"];

export default function App() {
  return (
    <div className={`relative flex min-h-screen flex-col border-x border-b border-[#777] bg-[#171717] ${CJK}`}>
      <header className="flex h-[31px] items-center bg-[#777] pl-2 text-white">
        <span className="flex h-[15px] w-4 items-center justify-center border border-[#c88cff] bg-[#1f0040] text-[10px] font-bold leading-none text-[#cf96fd]">Ae</span>
        <h1 className="ml-[5px] text-[13px]">Adobe After Effects 2020 - F:\<span className="text-[12px]">无标题项目.aep *</span></h1>
        <span className="flex-1" />
        <button type="button" aria-label="最小化" className="mr-[35px]"><Icon w={10} h={10}><path d="M0 5h10v1H0z" /></Icon></button>
        <button type="button" aria-label="最大化" className="mr-9"><Icon w={10} h={10}><path d="M.5.5h9v9h-9z" {...line} /></Icon></button>
        <button type="button" aria-label="关闭窗口" className="mr-[18px]"><Icon w={10} h={10}><path d="M0 0l10 10M10 0 0 10" {...line} /></Icon></button>
      </header>
      <nav className="flex h-5 items-center gap-[15px] border-b border-[#eee] bg-white pl-[7px] text-[12px] text-black">
        {menus.map((m) => (
          <button key={m} type="button" className="leading-none">{m}</button>
        ))}
      </nav>
      <Toolbar />
      <main className="flex min-h-[563px] gap-1 px-px">
        <ProjectPanel />
        <Viewer />
        <RightColumn />
      </main>
      <div className="flex flex-1 flex-col px-px"><Timeline /></div>
      <Watermark />
    </div>
  );
}
